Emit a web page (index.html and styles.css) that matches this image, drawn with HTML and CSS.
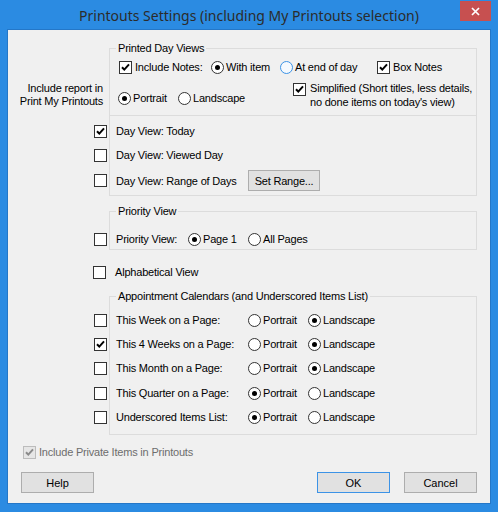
FILE: index.html
```html
<!DOCTYPE html>
<html lang="en">
<head>
<meta charset="utf-8">
<title>Printouts Settings</title>
<link rel="stylesheet" href="styles.css">
</head>
<body>
<div class="window">
  <header class="titlebar">
    <span class="tb-spacer"></span>
    <h1 class="title">Printouts Settings (including My Printouts selection)</h1>
    <button class="close" aria-label="Close"><svg width="9" height="9" viewBox="0 0 9 9"><path d="M1 1L8 8M8 1L1 8" stroke="#fff" stroke-width="1.7" fill="none"/></svg></button>
  </header>
  <main class="client">
    <div class="groups">
      <fieldset class="box g1">
        <legend>Printed Day Views</legend>
        <div class="top">
          <div class="row r-notes">
            <label class="opt"><span class="cb"><svg viewBox="0 0 11 11" width="11" height="11"><path d="M2 5.2L4.3 7.6L9 2.4" stroke="#000" stroke-width="2" fill="none"/></svg></span>Include Notes:</label>
            <label class="opt r"><span class="rb on"></span>With item</label>
            <label class="opt r"><span class="rb focus"></span>At end of day</label>
            <label class="opt"><span class="cb"><svg viewBox="0 0 11 11" width="11" height="11"><path d="M2 5.2L4.3 7.6L9 2.4" stroke="#000" stroke-width="2" fill="none"/></svg></span>Box Notes</label>
          </div>
          <div class="r-orient">
            <div class="side-label">Include report in<br>Print My Printouts</div>
            <label class="opt r o-portrait"><span class="rb on"></span>Portrait</label>
            <label class="opt r o-land"><span class="rb"></span>Landscape</label>
            <label class="simp"><span class="cb"><svg viewBox="0 0 11 11" width="11" height="11"><path d="M2 5.2L4.3 7.6L9 2.4" stroke="#000" stroke-width="2" fill="none"/></svg></span><span class="simp-text">Simplified (Short titles, less details,<br>no done items on today's view)</span></label>
          </div>
        </div>
        <div class="days">
          <div class="row out r-day">
            <label class="opt wide"><span class="cb"><svg viewBox="0 0 11 11" width="11" height="11"><path d="M2 5.2L4.3 7.6L9 2.4" stroke="#000" stroke-width="2" fill="none"/></svg></span>Day View: Today</label>
          </div>
          <div class="row out r-day">
            <label class="opt wide"><span class="cb"></span>Day View: Viewed Day</label>
          </div>
          <div class="row out r-day r-range">
            <label class="opt wide"><span class="cb"></span>Day View: Range of Days</label>
            <button class="btn btn-range">Set Range...</button>
          </div>
        </div>
      </fieldset>

      <fieldset class="box g2">
        <legend>Priority View</legend>
        <div class="row out r-prio">
          <label class="opt wide"><span class="cb"></span>Priority View:</label>
          <label class="opt r"><span class="rb on"></span>Page 1</label>
          <label class="opt r"><span class="rb"></span>All Pages</label>
        </div>
      </fieldset>

      <div class="row out r-alpha">
        <label class="opt wide"><span class="cb"></span>Alphabetical View</label>
      </div>

      <fieldset class="box g3">
        <legend>Appointment Calendars (and Underscored Items List)</legend>
        <div class="row out r-cal">
          <label class="opt wide"><span class="cb"></span>This Week on a Page:</label>
          <label class="opt r"><span class="rb"></span>Portrait</label>
          <label class="opt r"><span class="rb on"></span>Landscape</label>
        </div>
        <div class="row out r-cal">
          <label class="opt wide"><span class="cb"><svg viewBox="0 0 11 11" width="11" height="11"><path d="M2 5.2L4.3 7.6L9 2.4" stroke="#000" stroke-width="2" fill="none"/></svg></span>This 4 Weeks on a Page:</label>
          <label class="opt r"><span class="rb"></span>Portrait</label>
          <label class="opt r"><span class="rb on"></span>Landscape</label>
        </div>
        <div class="row out r-cal">
          <label class="opt wide"><span class="cb"></span>This Month on a Page:</label>
          <label class="opt r"><span class="rb"></span>Portrait</label>
          <label class="opt r"><span class="rb on"></span>Landscape</label>
        </div>
        <div class="row out r-cal">
          <label class="opt wide"><span class="cb"></span>This Quarter on a Page:</label>
          <label class="opt r"><span class="rb on"></span>Portrait</label>
          <label class="opt r"><span class="rb"></span>Landscape</label>
        </div>
        <div class="row out r-cal">
          <label class="opt wide"><span class="cb"></span>Underscored Items List:</label>
          <label class="opt r"><span class="rb on"></span>Portrait</label>
          <label class="opt r"><span class="rb"></span>Landscape</label>
        </div>
      </fieldset>
    </div>

    <div class="footer">
      <label class="opt private"><span class="cb dis"><svg viewBox="0 0 11 11" width="11" height="11"><path d="M2 5.2L4.3 7.6L9 2.4" stroke="#8a8a8a" stroke-width="2" fill="none"/></svg></span>Include Private Items in Printouts</label>
      <div class="buttons">
        <button class="btn">Help</button>
        <button class="btn btn-default">OK</button>
        <button class="btn">Cancel</button>
      </div>
    </div>
  </main>
</div>
</body>
</html>
```

FILE: styles.css
```css
* { box-sizing: border-box; }
html, body { margin: 0; padding: 0; }
body {
  width: 498px;
  height: 512px;
  overflow: hidden;
  font-family: "Liberation Sans", Arial, sans-serif;
  font-size: 11px;
  letter-spacing: -0.2px;
  color: #000;
}
.window {
  width: 498px;
  height: 512px;
  background: #2b8be2;
  display: flex;
  flex-direction: column;
}
.titlebar {
  height: 30px;
  display: grid;
  grid-template-columns: 1fr auto 1fr;
}
.title {
  grid-column: 2;
  margin: 0;
  font-family: "Noto Sans", sans-serif;
  font-weight: 400;
  font-size: 14px;
  letter-spacing: 0;
  line-height: 32px;
  color: #2b2b2b;
  white-space: nowrap;
}
.close {
  grid-column: 3;
  justify-self: end;
  align-self: start;
  margin: 1px 7px 0 0;
  width: 31px;
  height: 20px;
  background: #c75050;
  border: 0;
  padding: 0;
  display: flex;
  align-items: center;
  justify-content: center;
}
.close svg { display: block; }

.client {
  margin: 0 8px;
  height: 473px;
  background: #f0f0f0;
  box-shadow: 0 0 0 1px #2477c8;
  padding-top: 12px;
  display: flex;
  flex-direction: column;
}
.groups {
  margin-left: 101px;
  width: 368px;
  display: flex;
  flex-direction: column;
}
.box {
  margin: 0;
  padding: 0;
  border: 1px solid #dcdcdc;
  min-width: 0;
}
.box legend {
  padding: 0 2px;
  margin-left: 6px;
  height: 13px;
  line-height: 13px;
}

/* controls */
.opt {
  display: flex;
  align-items: center;
  gap: 3px;
  height: 16px;
  white-space: nowrap;
}
.opt.r { gap: 2px; }
.opt.wide { gap: 9px; }
.cb {
  width: 13px;
  height: 13px;
  border: 1px solid #333;
  background: #fff;
  flex: none;
  display: flex;
  align-items: center;
  justify-content: center;
}
.cb svg { display: block; }
.cb.dis { border-color: #bcbcbc; background: #e6e6e6; }
.rb {
  width: 13px;
  height: 13px;
  border: 1px solid #333;
  border-radius: 50%;
  background: #fff;
  flex: none;
  display: flex;
  align-items: center;
  justify-content: center;
}
.rb.on::after {
  content: "";
  width: 5px;
  height: 5px;
  border-radius: 50%;
  background: #000;
}
.rb.focus { border-color: #3c93e6; background: #f4f9fe; }

.row {
  display: grid;
  align-items: center;
  height: 16px;
}
.out { margin-left: -16px; }

/* printed day views */
.top {
  padding: 4px 0 6px;
  border-bottom: 1px solid #dcdcdc;
}
.r-notes {
  grid-template-columns: 92px 69px 97px auto;
  padding-left: 9px;
}
.r-orient {
  margin-top: 6px;
  height: 28px;
  display: flex;
  align-items: flex-start;
}
.side-label {
  width: 100px;
  margin: 1px 15px 0 -107px;
  text-align: right;
  line-height: 13px;
  white-space: nowrap;
}
.o-portrait { width: 60px; margin-top: 9px; }
.o-land { width: 115px; margin-top: 9px; }
.simp {
  display: flex;
  align-items: flex-start;
  gap: 4px;
}
.simp .cb { margin-top: 2px; }
.simp-text { line-height: 14px; white-space: nowrap; }

.days { padding: 7px 0 4px; }
.r-day { grid-template-columns: 154px auto; }
.r-day + .r-day { margin-top: 8px; }
.r-range { height: 21px; margin-top: 7px !important; }
.btn {
  height: 21px;
  width: 73px;
  background: #e1e1e1;
  border: 1px solid #adadad;
  font: inherit;
  letter-spacing: 0;
  color: #000;
  padding: 0;
}
.btn-range { width: 72px; letter-spacing: -0.2px; }
.btn-default { border-color: #3c93e6; margin-left: auto; }

/* priority */
.g2 { margin-top: 9px; }
.r-prio {
  grid-template-columns: 94px 60px auto;
  margin-top: 13px;
  margin-bottom: 2px;
}
.r-alpha { margin-top: 14px; }

/* calendars */
.g3 { margin-top: 10px; padding-bottom: 9px; }
.r-cal { grid-template-columns: 154px 60px auto; margin-top: 8px; }
.r-cal:first-of-type { margin-top: 9px; }
.r-cal:nth-of-type(4) { margin-top: 9px; }

/* footer */
.footer { padding: 9px 13px 0 13px; }
.private { margin-left: 2px; color: #6d6d6d; }
.buttons {
  display: flex;
  gap: 14px;
  margin-top: 12px;
}
```
